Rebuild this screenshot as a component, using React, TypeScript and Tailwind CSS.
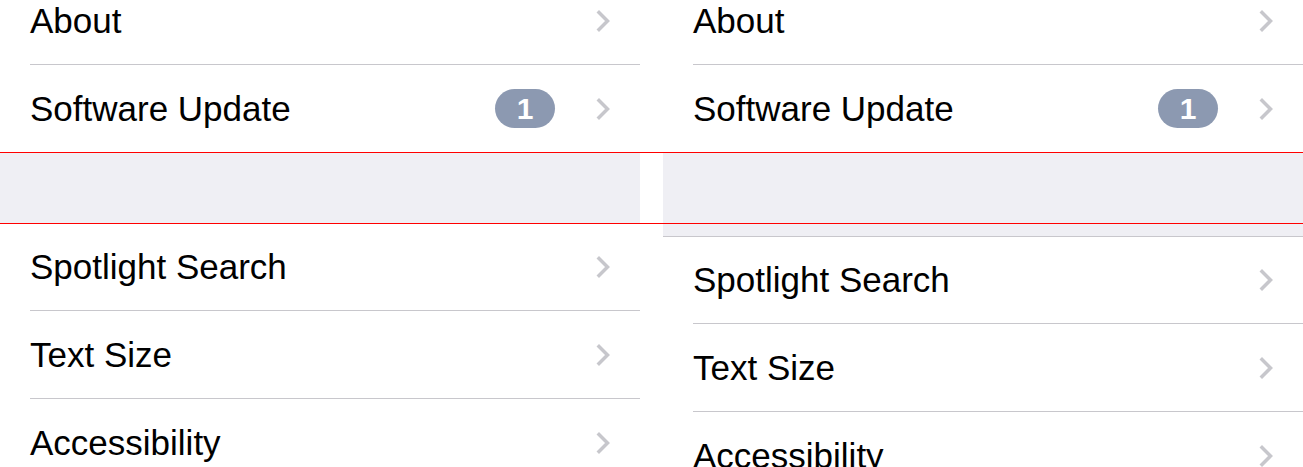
const Chevron = () => (
  <svg width="15" height="24" viewBox="0 0 15 24" className="shrink-0">
    <polyline points="3,3.5 11.5,12 3,20.5" fill="none" stroke="#c7c7cc" strokeWidth="3.5" strokeLinecap="square" />
  </svg>
);

const Row = ({ label, badge, h }: { label: string; badge?: string; h: string }) => (
  <div className={`flex ${h} items-center bg-white pl-[30px] pr-[29px]`}>
    <span className="flex-1 text-[35px] leading-[40px] text-black">{label}</span>
    {badge && (
      <span className="mr-[41px] flex h-[39px] w-[60px] items-center justify-center rounded-full bg-[#8c99b1] text-[30px] font-bold text-white">
        {badge}
      </span>
    )}
    <Chevron />
  </div>
);

const Sep = () => (
  <div className="bg-white pl-[30px]">
    <div className="h-px bg-[#c8c7cc]" />
  </div>
);

const Panel = ({ right }: { right?: boolean }) => (
  <div className="flex w-[640px] shrink-0 flex-col">
    <div className="flex h-[64px] items-start bg-white">
      <div className="w-full pt-px">
        <Row label="About" h="h-[40px]" />
      </div>
    </div>
    <Sep />
    <Row label="Software Update" badge="1" h="h-[87px]" />
    {right ? (
      <>
        <div className="h-[84px] bg-[#efeff4]" />
        <div className="h-px bg-[#c8c7cc]" />
      </>
    ) : (
      <div className="h-[72px] bg-[#efeff4]" />
    )}
    <Row label="Spotlight Search" h="h-[86px]" />
    <Sep />
    <Row label="Text Size" h="h-[87px]" />
    <Sep />
    <Row label="Accessibility" h="h-[88px]" />
  </div>
);

export default function App() {
  return (
    <div className="relative h-[467px] w-[1303px] overflow-hidden bg-white" style={{ fontFamily: '"Liberation Sans", Arial, sans-serif' }}>
      <div className="flex gap-[23px]">
        <Panel />
        <Panel right />
      </div>
      <div className="absolute left-0 right-0 top-[152px] h-px bg-[#ff0000]" />
      <div className="absolute left-0 right-0 top-[223px] h-px bg-[#ff0000]" />
    </div>
  );
}
